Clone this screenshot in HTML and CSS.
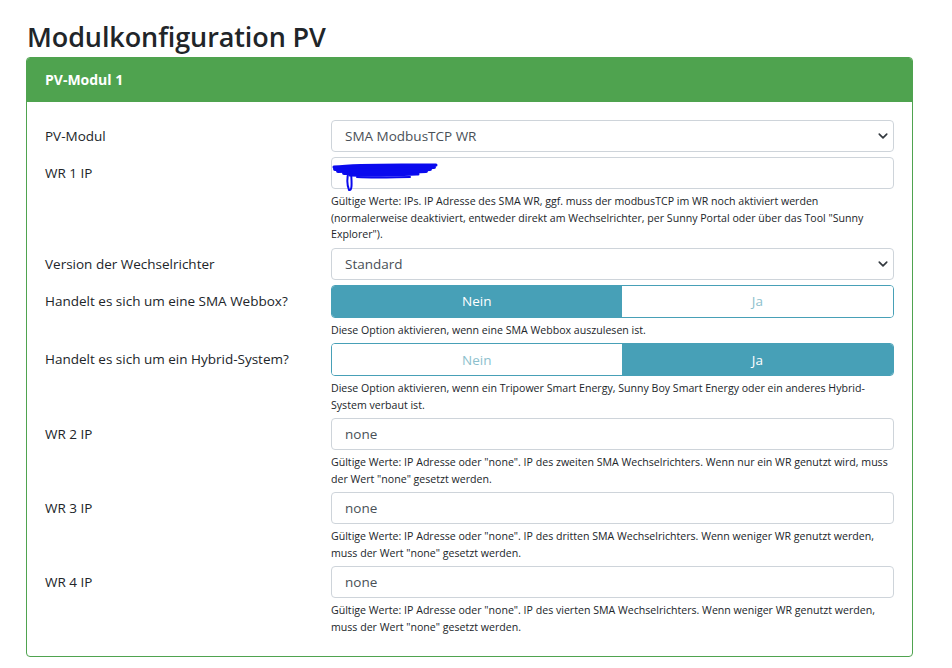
FILE: index.html
```html
<!DOCTYPE html>
<html lang="de">
<head>
    <meta charset="UTF-8">
    <title>Modulkonfiguration PV</title>
    <link rel="stylesheet" href="styles.css">
</head>
<body>
    <div class="page">
        <h1>Modulkonfiguration PV</h1>
        <div class="card">
            <div class="card-header">PV-Modul 1</div>
            <div class="card-body">
                <!-- PV-Modul -->
                <div class="form-row">
                    <label class="form-label">PV-Modul</label>
                    <div class="form-field">
                        <div class="select-wrap">
                            <select class="form-control">
                                <option>SMA ModbusTCP WR</option>
                            </select>
                            <svg class="chevron" width="12" height="10" viewBox="0 0 16 16"><path d="M2 5l6 6 6-6" fill="none" stroke="#343a40" stroke-width="2.6" stroke-linecap="round" stroke-linejoin="round"/></svg>
                        </div>
                    </div>
                </div>
                <div class="form-row">
                    <label class="form-label">WR 1 IP</label>
                    <div class="form-field">
                        <div class="input-wrap">
                            <input class="form-control" type="text" value="">
                            <!-- redacted address scribble -->
                            <svg class="redact" width="112" height="34" viewBox="0 0 112 34">
                                <g fill="none" stroke="#0a0aee" stroke-linecap="round">
                                    <path d="M2 8 C30 5 70 6 104 6" stroke-width="3"/>
                                    <path d="M3 10 C35 8 75 9 102 8" stroke-width="4"/>
                                    <path d="M6 12 C40 11 75 11 98 10" stroke-width="4"/>
                                    <path d="M12 14 C40 14 70 13 94 12" stroke-width="4"/>
                                    <path d="M18 16 C45 17 65 16 86 15" stroke-width="3"/>
                                    <path d="M25 18 C45 19 65 18 78 18" stroke-width="2"/>
                                    <path d="M17 11 C15 18 15 26 17 31 C20 32 20 26 19 13" stroke-width="2"/>
                                </g>
                            </svg>
                        </div>
                        <small class="help">Gültige Werte: IPs. IP Adresse des SMA WR, ggf. muss der modbusTCP im WR noch aktiviert werden (normalerweise deaktiviert, entweder direkt am Wechselrichter, per Sunny Portal oder über das Tool "Sunny Explorer").</small>
                    </div>
                </div>
                <div class="form-row">
                    <label class="form-label">Version der Wechselrichter</label>
                    <div class="form-field">
                        <div class="select-wrap">
                            <select class="form-control">
                                <option>Standard</option>
                            </select>
                            <svg class="chevron" width="12" height="10" viewBox="0 0 16 16"><path d="M2 5l6 6 6-6" fill="none" stroke="#343a40" stroke-width="2.6" stroke-linecap="round" stroke-linejoin="round"/></svg>
                        </div>
                    </div>
                </div>
                <div class="form-row">
                    <label class="form-label">Handelt es sich um eine SMA Webbox?</label>
                    <div class="form-field">
                        <div class="btn-group">
                            <button class="btn active">Nein</button>
                            <button class="btn">Ja</button>
                        </div>
                        <small class="help">Diese Option aktivieren, wenn eine SMA Webbox auszulesen ist.</small>
                    </div>
                </div>
                <div class="form-row">
                    <label class="form-label">Handelt es sich um ein Hybrid-System?</label>
                    <div class="form-field">
                        <div class="btn-group">
                            <button class="btn">Nein</button>
                            <button class="btn active">Ja</button>
                        </div>
                        <small class="help">Diese Option aktivieren, wenn ein Tripower Smart Energy, Sunny Boy Smart Energy oder ein anderes Hybrid-System verbaut ist.</small>
                    </div>
                </div>
                <div class="form-row">
                    <label class="form-label">WR 2 IP</label>
                    <div class="form-field">
                        <input class="form-control" type="text" value="none">
                        <small class="help">Gültige Werte: IP Adresse oder "none". IP des zweiten SMA Wechselrichters. Wenn nur ein WR genutzt wird, muss der Wert "none" gesetzt werden.</small>
                    </div>
                </div>
                <div class="form-row">
                    <label class="form-label">WR 3 IP</label>
                    <div class="form-field">
                        <input class="form-control" type="text" value="none">
                        <small class="help">Gültige Werte: IP Adresse oder "none". IP des dritten SMA Wechselrichters. Wenn weniger WR genutzt werden, muss der Wert "none" gesetzt werden.</small>
                    </div>
                </div>
                <div class="form-row">
                    <label class="form-label">WR 4 IP</label>
                    <div class="form-field">
                        <input class="form-control" type="text" value="none">
                        <small class="help">Gültige Werte: IP Adresse oder "none". IP des vierten SMA Wechselrichters. Wenn weniger WR genutzt werden, muss der Wert "none" gesetzt werden.</small>
                    </div>
                </div>
            </div>
        </div>
    </div>
</body>
</html>
```

FILE: styles.css
```css
* {
    margin: 0;
    padding: 0;
    box-sizing: border-box;
}

body {
    font-family: "Open Sans", "Noto Sans", sans-serif;
    background: #fff;
    color: #212529;
    font-size: 14px;
}

.page {
    width: 887px;
    margin-left: 26px;
    padding-top: 20px;
}

h1 {
    font-size: 27px;
    font-weight: 600;
    line-height: 34px;
    margin-bottom: 3px;
    padding-left: 1px;
    letter-spacing: -0.1px;
}

/* Card */
.card {
    border: 1px solid #4fa34f;
    border-radius: 4px;
    overflow: hidden;
}
.card-header {
    background: #4fa34f;
    color: #fff;
    font-weight: 700;
    font-size: 14px;
    height: 44px;
    line-height: 44px;
    padding-left: 18px;
}
.card-body {
    padding: 18px 18px 21px 18px;
}

/* Rows */
.form-row {
    display: grid;
    grid-template-columns: 286px 1fr;
    margin-bottom: 5px;
}
.form-row:last-child {
    margin-bottom: 0;
}
.form-label {
    line-height: 32px;
    font-size: 13.5px;
    color: #212529;
}
.form-control {
    display: block;
    width: 100%;
    height: 32px;
    border: 1px solid #ced4da;
    border-radius: 4px;
    padding: 0 13px;
    font-family: inherit;
    font-size: 13.5px;
    color: #495057;
    background: #fff;
    outline: none;
}
select.form-control {
    appearance: none;
    -webkit-appearance: none;
}
.select-wrap,
.input-wrap {
    position: relative;
}
.chevron {
    position: absolute;
    right: 5px;
    top: 11px;
}
.redact {
    position: absolute;
    left: 1px;
    top: 2px;
}

.help {
    display: block;
    font-size: 10.6px;
    line-height: 16.5px;
    margin-top: 4px;
    color: #212529;
}

/* Toggle buttons */
.btn-group {
    display: flex;
    height: 33px;
    border: 1px solid #47a0b7;
    border-radius: 4px;
    overflow: hidden;
}
.btn {
    flex: 1 1 auto;
    border: none;
    background: #fff;
    color: #8dbfcd;
    font-family: inherit;
    font-size: 13.5px;
}
.btn.active {
    background: #47a0b7;
    color: #fff;
}
```
